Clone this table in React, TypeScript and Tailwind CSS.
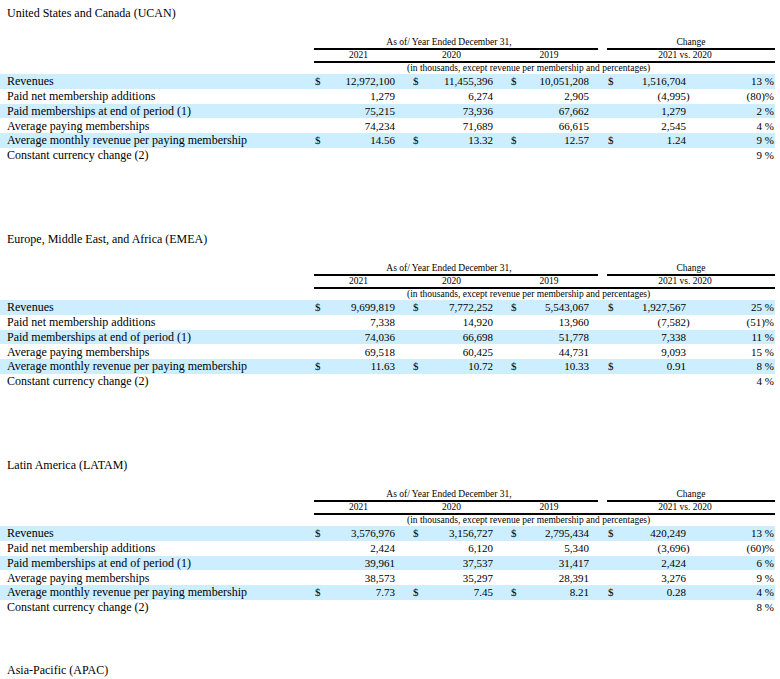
import React from 'react'

type Cell = { v: string; dollar?: boolean } | null

interface Row {
  label: string
  cells: [Cell, Cell, Cell, Cell]
  pct: string
}

interface Region {
  title: string
  rows: Row[]
}

const d = (v: string): Cell => ({ v, dollar: true })
const n = (v: string): Cell => ({ v })

const regions: Region[] = [
  {
    title: 'United States and Canada (UCAN)',
    rows: [
      { label: 'Revenues', cells: [d('12,972,100'), d('11,455,396'), d('10,051,208'), d('1,516,704')], pct: '13 %' },
      { label: 'Paid net membership additions', cells: [n('1,279'), n('6,274'), n('2,905'), n('(4,995)')], pct: '(80)%' },
      { label: 'Paid memberships at end of period (1)', cells: [n('75,215'), n('73,936'), n('67,662'), n('1,279')], pct: '2 %' },
      { label: 'Average paying memberships', cells: [n('74,234'), n('71,689'), n('66,615'), n('2,545')], pct: '4 %' },
      { label: 'Average monthly revenue per paying membership', cells: [d('14.56'), d('13.32'), d('12.57'), d('1.24')], pct: '9 %' },
      { label: 'Constant currency change (2)', cells: [null, null, null, null], pct: '9 %' },
    ],
  },
  {
    title: 'Europe, Middle East, and Africa (EMEA)',
    rows: [
      { label: 'Revenues', cells: [d('9,699,819'), d('7,772,252'), d('5,543,067'), d('1,927,567')], pct: '25 %' },
      { label: 'Paid net membership additions', cells: [n('7,338'), n('14,920'), n('13,960'), n('(7,582)')], pct: '(51)%' },
      { label: 'Paid memberships at end of period (1)', cells: [n('74,036'), n('66,698'), n('51,778'), n('7,338')], pct: '11 %' },
      { label: 'Average paying memberships', cells: [n('69,518'), n('60,425'), n('44,731'), n('9,093')], pct: '15 %' },
      { label: 'Average monthly revenue per paying membership', cells: [d('11.63'), d('10.72'), d('10.33'), d('0.91')], pct: '8 %' },
      { label: 'Constant currency change (2)', cells: [null, null, null, null], pct: '4 %' },
    ],
  },
  {
    title: 'Latin America (LATAM)',
    rows: [
      { label: 'Revenues', cells: [d('3,576,976'), d('3,156,727'), d('2,795,434'), d('420,249')], pct: '13 %' },
      { label: 'Paid net membership additions', cells: [n('2,424'), n('6,120'), n('5,340'), n('(3,696)')], pct: '(60)%' },
      { label: 'Paid memberships at end of period (1)', cells: [n('39,961'), n('37,537'), n('31,417'), n('2,424')], pct: '6 %' },
      { label: 'Average paying memberships', cells: [n('38,573'), n('35,297'), n('28,391'), n('3,276')], pct: '9 %' },
      { label: 'Average monthly revenue per paying membership', cells: [d('7.73'), d('7.45'), d('8.21'), d('0.28')], pct: '4 %' },
      { label: 'Constant currency change (2)', cells: [null, null, null, null], pct: '8 %' },
    ],
  },
]

// left pad for "$", right pad for the figure, per value column
const pads = ['pl-[1px] pr-[8px]', 'pl-[10px] pr-[7px]', 'pl-[11px] pr-[9px]', 'pl-[1px] pr-[14px]']

const GRID = 'grid grid-cols-[314px_89px_97px_98px_9px_93px_75px] w-[775px]'

function Value({ cell, pad }: { cell: Cell; pad: string }) {
  if (!cell) return <div />
  const neg = cell.v.startsWith('(')
  return (
    <div className={`flex items-center justify-between ${pad}`}>
      <span>{cell.dollar ? '$' : ''}</span>
      <span className={neg ? '-mr-[3.7px]' : ''}>{cell.v}</span>
    </div>
  )
}

function RegionTable({ region }: { region: Region }) {
  return (
    <section>
      <h2 className="pl-[7px] text-[12px] leading-[15px]">{region.title}</h2>
      <div className="mt-[16px] text-[9.5px] leading-[11px]">
        <div className={GRID}>
          <div />
          <div className="col-span-3 border-b-2 border-black text-center pr-[14px]">As of/ Year Ended December 31,</div>
          <div />
          <div className="col-span-2 border-b-2 border-black text-center">Change</div>
        </div>
        <div className={GRID}>
          <div />
          <div className="col-span-6 grid grid-cols-[89px_97px_98px_9px_168px] border-b-2 border-black">
            <div className="text-center">2021</div>
            <div className="text-center">2020</div>
            <div className="text-center">2019</div>
            <div />
            <div className="text-center pr-[12px]">2021 vs. 2020</div>
          </div>
        </div>
        <div className={GRID}>
          <div />
          <div />
          <div className="col-span-5 pl-[4px] whitespace-nowrap">
            (in thousands, except revenue per membership and percentages)
          </div>
        </div>
      </div>
      <div>
        {region.rows.map((row, i) => (
          <div
            key={row.label}
            className={`${GRID} h-[14.75px] items-center text-[11px] leading-[14px] ${i % 2 === 0 && i < 5 ? 'bg-[#cceeff]' : ''}`}
          >
            <div className="pl-[7px] text-[12px] whitespace-nowrap">{row.label}</div>
            <Value cell={row.cells[0]} pad={pads[0]} />
            <Value cell={row.cells[1]} pad={pads[1]} />
            <Value cell={row.cells[2]} pad={pads[2]} />
            <div />
            <Value cell={row.cells[3]} pad={pads[3]} />
            <div className="text-right pr-[1px] whitespace-pre">{row.pct}</div>
          </div>
        ))}
      </div>
    </section>
  )
}

export default function App() {
  return (
    <div
      className="w-[780px] h-[679px] overflow-hidden bg-white text-black pt-[6px]"
      style={{ fontFamily: '"Liberation Serif", "Times New Roman", serif' }}
    >
      <div className="flex flex-col gap-[69.5px]">
        {regions.map((r) => (
          <RegionTable key={r.title} region={r} />
        ))}
      </div>
      <h2 className="mt-[48px] pl-[7px] text-[12px] leading-[15px]">Asia-Pacific (APAC)</h2>
    </div>
  )
}
